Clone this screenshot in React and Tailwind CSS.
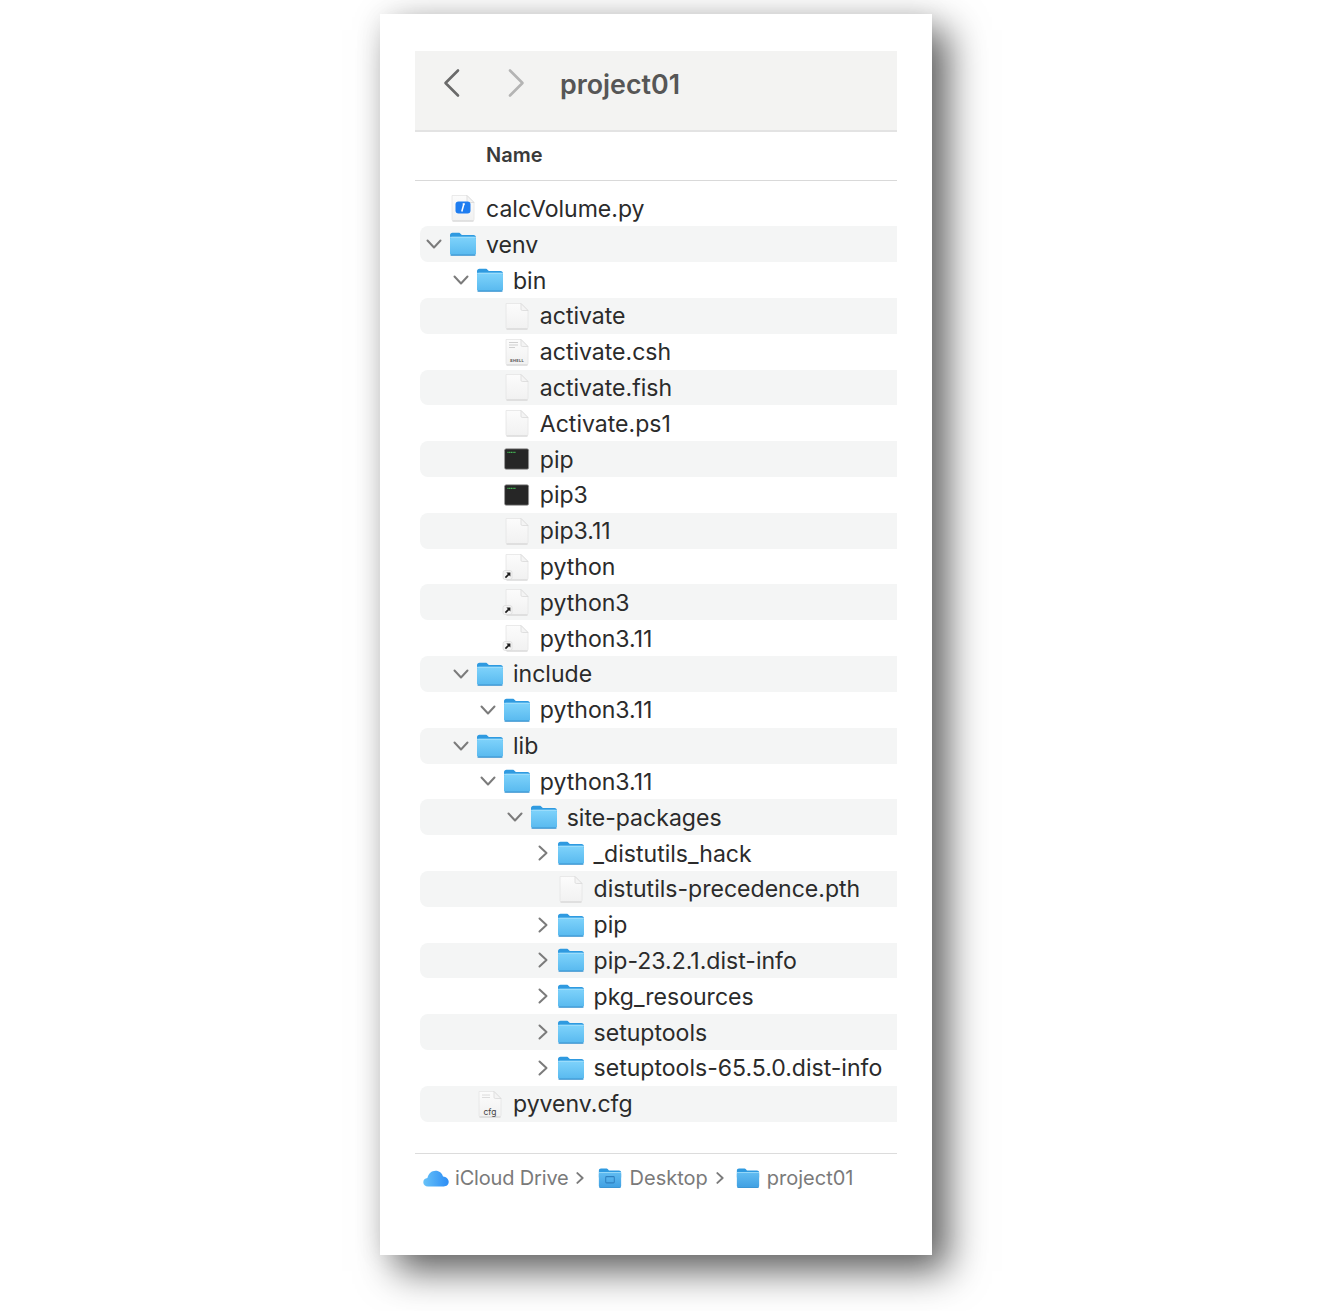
import React from "react";

function Folder({ size = 28, desktop = false, dark = false }) {
  const h = size * 0.86;
  return (
    <svg width={size} height={h} viewBox="0 1.4 28 23" preserveAspectRatio="none" className="block shrink-0">
      <defs>
        <linearGradient id="fb" x1="0" y1="0" x2="0" y2="1">
          <stop offset="0" stopColor="#7fd3fb" />
          <stop offset="1" stopColor="#58b9ef" />
        </linearGradient>
        <linearGradient id="fd" x1="0" y1="0" x2="0" y2="1">
          <stop offset="0" stopColor="#62bdf2" />
          <stop offset="1" stopColor="#3f9fe2" />
        </linearGradient>
      </defs>
      <path d="M1 4.5C1 3 2 2 3.5 2H9.5C10.6 2 11 2.4 11.8 3.2L12.8 4.2H24.5C26 4.2 27 5.2 27 6.6V12H1Z" fill="#2f9ae0" />
      <rect x="1" y="6" width="26" height="17.6" rx="2" fill={dark ? "url(#fd)" : "url(#fb)"} />
      <rect x="1" y="6" width="26" height="0.9" fill="#a4e0fc" />
      <rect x="1.5" y="23" width="25" height="1" rx="0.5" fill="#3b93cf" />
      {desktop && <rect x="9" y="11" width="10" height="7" rx="1" fill="none" stroke="#2f80c0" strokeWidth="1.2" />}
    </svg>
  );
}

function Doc({ children }) {
  return (
    <svg width="26" height="28" viewBox="0 0 26 28" className="block shrink-0 overflow-visible">
      <defs>
        <linearGradient id="dg" x1="0" y1="0" x2="0" y2="1">
          <stop offset="0" stopColor="#fcfcfc" />
          <stop offset="1" stopColor="#f1f1f1" />
        </linearGradient>
      </defs>
      <path d="M2 1.5H17L24 8.5V25.5C24 26.3 23.5 26.8 22.8 26.8H3.2C2.5 26.8 2 26.3 2 25.5Z" fill="url(#dg)" stroke="#e4e4e4" strokeWidth="0.8" />
      <path d="M17 1.5V7.3C17 8 17.5 8.5 18.2 8.5H24Z" fill="#f4f4f4" stroke="#d6d6d6" strokeWidth="0.7" />
      <path d="M2.5 27.1H23.5" stroke="#cfcfcf" strokeWidth="0.9" />
      {children}
    </svg>
  );
}

const Alias = () => (
  <Doc>
    <rect x="-1" y="17.5" width="9" height="9" rx="2" fill="#f4f4f4" stroke="#d0d0d0" strokeWidth="0.5" />
    <path d="M1.4 24.6L5.4 20.6" fill="none" stroke="#1c1c1c" strokeWidth="1.7" />
    <path d="M2.4 19.6H6.4V23.6Z" fill="#1c1c1c" />
  </Doc>
);

const Shell = () => (
  <Doc>
    <path d="M5 4.5H14M5 7H14M5 9.5H11" stroke="#cfcfcf" strokeWidth="1" />
    <text x="13" y="24" textAnchor="middle" fontSize="4" fontWeight="700" letterSpacing="0.3" fill="#555" fontFamily="Inter, sans-serif">SHELL</text>
  </Doc>
);

const Cfg = () => (
  <Doc>
    <path d="M5 5H13M5 7.5H13" stroke="#d8d8d8" strokeWidth="0.9" />
    <text x="13" y="24.5" textAnchor="middle" fontSize="8.5" fill="#444" fontFamily="Inter, sans-serif">cfg</text>
  </Doc>
);

const Py = () => (
  <Doc>
    <rect x="5.5" y="7.5" width="15" height="12" rx="3" fill="#1f7df0" />
    <path d="M14 9.5L11.8 17.5" stroke="#fff" strokeWidth="1.5" />
    <path d="M12.5 10H15" stroke="#fff" strokeWidth="1" />
  </Doc>
);

const Terminal = () => (
  <svg width="26" height="24" viewBox="0 0 26 24" className="block shrink-0">
    <rect x="0.6" y="1.8" width="24" height="20.4" rx="1.5" fill="#262626" stroke="#9a9a9a" strokeWidth="0.7" />
    <path d="M3.4 5.4H12" stroke="#45b955" strokeWidth="1.2" strokeDasharray="1.2 0.5" />
  </svg>
);

const Cloud = () => (
  <svg width="26" height="17" viewBox="0 0 26 17" className="block shrink-0">
    <defs>
      <linearGradient id="cl" x1="0" y1="0" x2="1" y2="0">
        <stop offset="0" stopColor="#67c2f8" />
        <stop offset="1" stopColor="#2d8df5" />
      </linearGradient>
    </defs>
    <path d="M5 16.5C2.2 16.5 0.3 14.6 0.3 12.2C0.3 9.9 2 8.2 4.4 8C5.4 3.6 8.6 0.8 12.6 0.8C16.3 0.8 19 3.1 20 6.4C23.2 6.6 25.7 9 25.7 11.8C25.7 14.6 23.6 16.5 20.7 16.5Z" fill="url(#cl)" />
  </svg>
);

const Chevron = ({ open, className = "", sw = 2 }) => (
  <svg width="16" height="16" viewBox="0 0 16 16" className={"block " + className}>
    <path d={open ? "M1.5 4.5L8 11.5L14.5 4.5" : "M4.5 1.5L11.5 8L4.5 14.5"} fill="none" stroke="#7b7b7b" strokeWidth={sw} strokeLinecap="round" strokeLinejoin="round" />
  </svg>
);

const depthClass = ["pl-0", "pl-[27px]", "pl-[53.8px]", "pl-[80.7px]", "pl-[107.6px]", "pl-[134.5px]"];

const rows = [
  [0, "py", "calcVolume.py"],
  [0, "open", "venv"],
  [1, "open", "bin"],
  [2, "doc", "activate"],
  [2, "shell", "activate.csh"],
  [2, "doc", "activate.fish"],
  [2, "doc", "Activate.ps1"],
  [2, "term", "pip"],
  [2, "term", "pip3"],
  [2, "doc", "pip3.11"],
  [2, "alias", "python"],
  [2, "alias", "python3"],
  [2, "alias", "python3.11"],
  [1, "open", "include"],
  [2, "open", "python3.11"],
  [1, "open", "lib"],
  [2, "open", "python3.11"],
  [3, "open", "site-packages"],
  [4, "closed", "_distutils_hack"],
  [4, "doc", "distutils-precedence.pth"],
  [4, "closed", "pip"],
  [4, "closed", "pip-23.2.1.dist-info"],
  [4, "closed", "pkg_resources"],
  [4, "closed", "setuptools"],
  [4, "closed", "setuptools-65.5.0.dist-info"],
  [1, "cfg", "pyvenv.cfg"],
];

function RowIcon({ kind }) {
  if (kind === "open" || kind === "closed") return <Folder />;
  if (kind === "py") return <Py />;
  if (kind === "shell") return <Shell />;
  if (kind === "term") return <Terminal />;
  if (kind === "alias") return <Alias />;
  if (kind === "cfg") return <Cfg />;
  return <Doc />;
}

function Row({ depth, kind, name, striped }) {
  return (
    <div className={"flex h-[35.82px] items-center rounded-l-lg " + depthClass[depth] + (striped ? " bg-[#f4f5f5]" : "")}>
      <div className="flex w-7 shrink-0 justify-center">
        {kind === "open" && <Chevron open />}
        {kind === "closed" && <Chevron className="ml-[2px]" />}
      </div>
      <div className="flex w-[30px] shrink-0 justify-center">
        <RowIcon kind={kind} />
      </div>
      <span className="ml-2 mt-[2px] whitespace-nowrap text-[23.05px] leading-none text-[#2b2b2b]">{name}</span>
    </div>
  );
}

export default function App() {
  return (
    <div className="h-[1311px] w-[1331px] overflow-hidden bg-white pl-[380px] pt-[14px] font-['Inter',sans-serif]">
      <div className="flex h-[1241px] w-[552px] flex-col bg-white px-[35px] pt-[37px] shadow-[16px_16px_36px_rgba(0,0,0,0.62),0_0_28px_rgba(0,0,0,0.07)]">
        <div className="flex h-[81px] items-start border-b-2 border-[#e3e3e3] bg-[#f3f3f2] pt-[17px]">
          <svg width="20" height="30" viewBox="0 0 20 30" className="ml-[27px] block">
            <path d="M16 2.5L3.5 15L16 27.5" fill="none" stroke="#6a6a6a" strokeWidth="2.6" strokeLinecap="round" strokeLinejoin="round" />
          </svg>
          <svg width="20" height="30" viewBox="0 0 20 30" className="ml-[44px] block">
            <path d="M4 2.5L16.5 15L4 27.5" fill="none" stroke="#b4b4b4" strokeWidth="2.6" strokeLinecap="round" strokeLinejoin="round" />
          </svg>
          <span className="-mt-[1px] ml-[34px] text-[26.8px] font-semibold leading-[34px] text-[#565656]">project01</span>
        </div>
        <div className="flex h-[49px] items-center border-b border-[#d9d9d9] pb-[2px] pl-[71px] text-[20px] font-semibold text-[#3a3a3a]">Name</div>
        <div className="ml-[5px] mt-[9.5px] flex flex-col">
          {rows.map(([depth, kind, name], i) => (
            <Row key={i} depth={depth} kind={kind} name={name} striped={i % 2 === 1} />
          ))}
        </div>
        <div className="mt-[31.5px] flex h-[49px] items-center border-t border-[#dcdcdc] pl-2 text-[20px] leading-[24px] text-[#7a7a7a]">
          <Cloud />
          <span className="ml-[6px] tracking-[-0.17px]">iCloud Drive</span>
          <Chevron className="ml-[5px] h-3 w-3" sw={2.6} />
          <span className="ml-[12px]"><Folder size={24} desktop dark /></span>
          <span className="ml-[8px]">Desktop</span>
          <Chevron className="ml-[6px] h-3 w-3" sw={2.6} />
          <span className="ml-[10px]"><Folder size={24} dark /></span>
          <span className="ml-[7px]">project01</span>
        </div>
      </div>
    </div>
  );
}
